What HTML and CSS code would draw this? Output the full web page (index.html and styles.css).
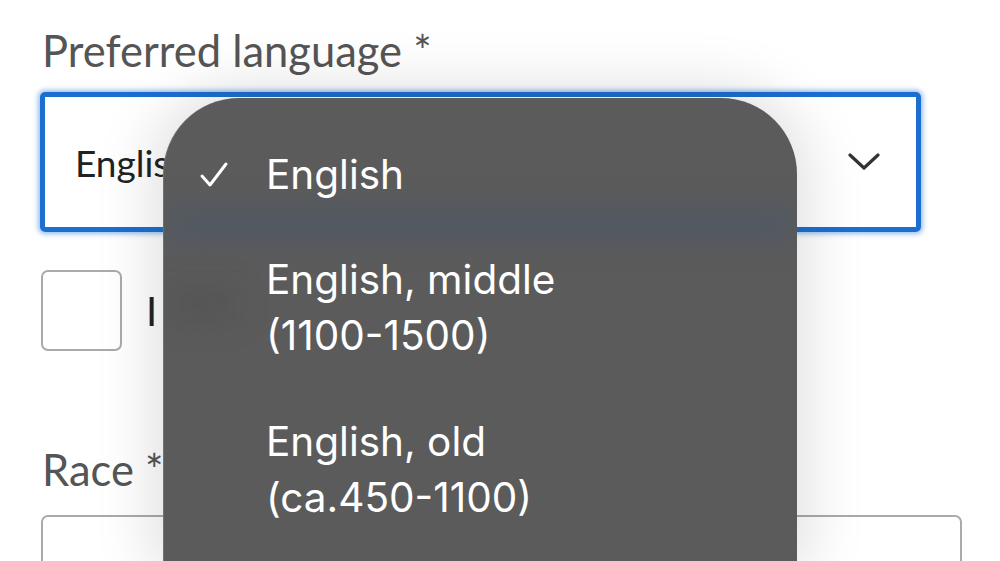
FILE: index.html
```html
<!DOCTYPE html>
<html>
  <head>
    <title>Profile details</title>
    <link rel="stylesheet" href="styles.css">
  </head>
  <body>
    <form class="profile-form">
      <label class="field-label">Preferred language *</label>
      <div class="select-box focused">
        <span class="select-value">English</span>
        <svg class="chevron" width="32" height="20" viewBox="0 0 32 20">
          <path d="M2 3 L16 16 L30 3" fill="none" stroke="#333" stroke-width="3.2" stroke-linecap="round" stroke-linejoin="round"/>
        </svg>
      </div>

      <div class="check-row">
        <span class="checkbox"></span>
        <span class="check-text">I</span>
      </div>

      <label class="field-label race-label">Race *</label>
      <div class="text-input"></div>
    </form>

    <!-- native picker opened over the select -->
    <div class="picker">
      <div class="picker-item selected">
        <svg class="tick" width="30" height="28" viewBox="0 0 30 28">
          <path d="M3 15 L11 24 L27 3" fill="none" stroke="#fff" stroke-width="3" stroke-linecap="round" stroke-linejoin="round"/>
        </svg>
        <span>English</span>
      </div>
      <div class="picker-item">
        <span>English, middle<br>(1100-1500)</span>
      </div>
      <div class="picker-item">
        <span>English, old<br>(ca.450-1100)</span>
      </div>
    </div>
  </body>
</html>
```

FILE: styles.css
```css
html,
body {
  height: 100%;
}
body {
  margin: 0;
  background-color: #fff;
  overflow: hidden;
  font-family: "Source Sans Pro", Lato, "Noto Sans", sans-serif;
}
.profile-form {
  height: 100%;
  overflow: hidden;
  padding: 24px 0 0 40px;
  width: 1000px;
  box-sizing: border-box;
  display: flex;
  flex-direction: column;
}
.field-label {
  display: block;
  padding-left: 2px;
  font-size: 43.5px;
  line-height: 52px;
  color: #555;
}
.select-box {
  margin-top: 16px;
  width: 881px;
  height: 140px;
  flex-shrink: 0;
  border: 5px solid #1b6fd1;
  border-radius: 5px;
  box-shadow: 0 0 5px 2px rgba(27, 111, 209, 0.45);
  box-sizing: border-box;
  display: flex;
  align-items: center;
  justify-content: space-between;
  padding: 0 36px 0 30px;
}
.select-value {
  font-size: 37px;
  color: #222;
}
.check-row {
  margin-top: 38px;
  display: flex;
  align-items: center;
  gap: 24px;
}
.checkbox {
  width: 81px;
  height: 81px;
  box-sizing: border-box;
  border: 2px solid #aaa;
  border-radius: 7px;
  margin-left: 1px;
}
.check-text {
  font-size: 40px;
  color: #222;
}
.race-label {
  margin-top: 92px;
}
.text-input {
  margin-top: 20px;
  width: 921px;
  height: 80px;
  flex-shrink: 0;
  border: 2px solid #aaa;
  border-radius: 7px;
  box-sizing: border-box;
  margin-left: 1px;
}
.picker {
  position: absolute;
  left: 163px;
  top: 98px;
  bottom: 0;
  width: 634px;
  background-color: #5b5b5b;
  border-radius: 76px 76px 0 0;
  box-shadow: 0 0 60px 10px rgba(0, 0, 0, 0.13), inset 1px 0 0 rgba(255, 255, 255, 0.15);
  font-family: Inter, "Noto Sans", sans-serif;
  color: #fff;
  overflow: hidden;
}
/* blurred select border showing through the material */
.picker::before {
  content: "";
  position: absolute;
  left: 0;
  right: 0;
  top: 108px;
  height: 36px;
  background: rgba(60, 85, 115, 0.3);
  filter: blur(14px);
}
/* blurred checkbox label behind the list */
.picker::after {
  content: "";
  position: absolute;
  left: 4px;
  top: 185px;
  width: 70px;
  height: 40px;
  background: rgba(40, 40, 40, 0.1);
  filter: blur(16px);
}
.picker-item {
  position: relative;
  display: flex;
  align-items: center;
  padding: 0 0 0 103px;
  font-size: 40.5px;
  line-height: 56px;
}
.picker-item.selected {
  height: 154px;
}
.picker-item + .picker-item {
  margin-bottom: 50px;
}
.tick {
  position: absolute;
  left: 36px;
  top: 63px;
}
```
